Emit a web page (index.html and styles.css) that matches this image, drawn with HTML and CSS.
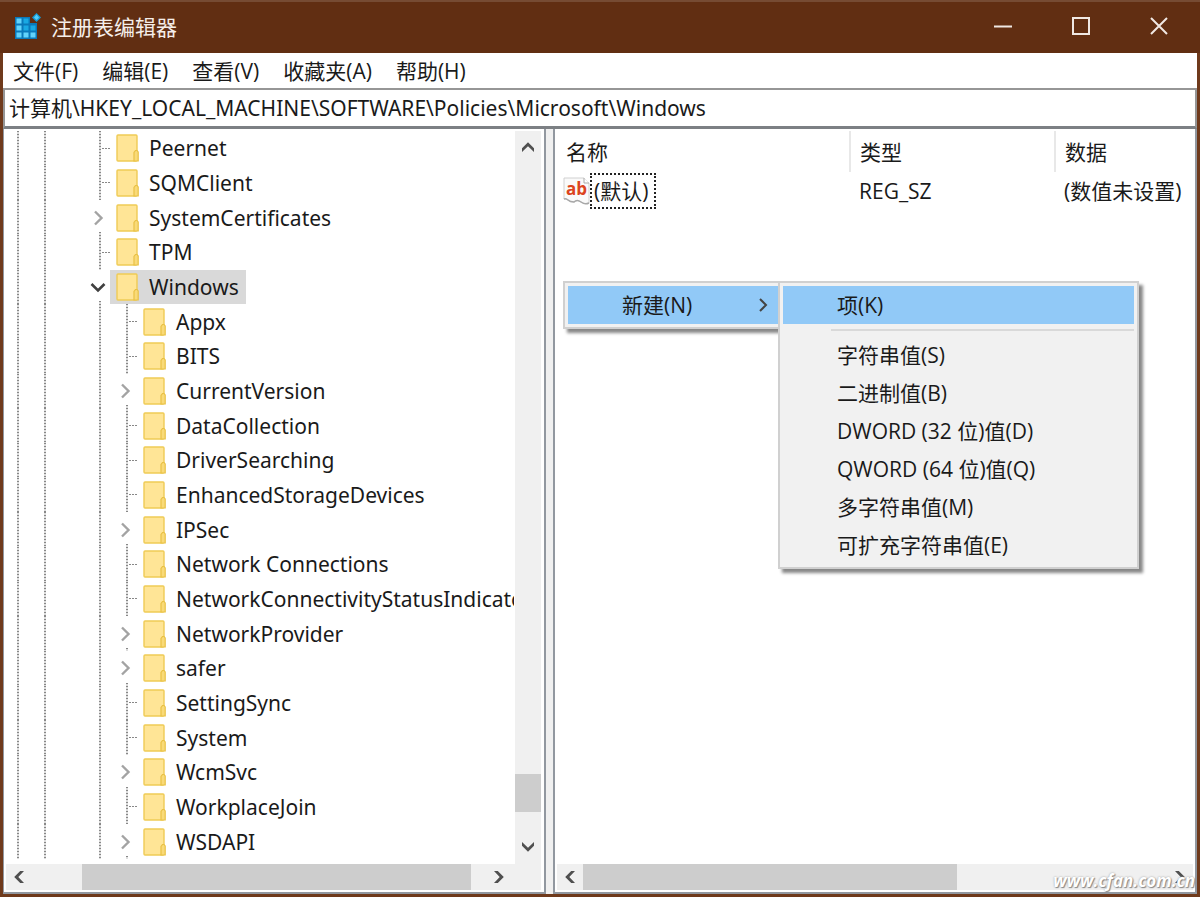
FILE: index.html
```html
<!DOCTYPE html>
<html lang="zh-CN">
<head>
<meta charset="utf-8">
<title>注册表编辑器</title>
<link rel="stylesheet" href="styles.css">
</head>
<body>
<svg class="defs" width="0" height="0" aria-hidden="true">
  <symbol id="folder" viewBox="0 0 23 28">
    <rect x="1" y="1" width="20" height="26" rx="1" fill="#ffe596" stroke="#efcb55" stroke-width="1.4"/>
    <path d="M18 27V18.5L19.5 16.5H21L22.2 18V27Z" fill="#f9da78" stroke="#e9c145" stroke-width="1.2"/>
  </symbol>
  <symbol id="closed" viewBox="0 0 16 16"><path d="M5 1.5L11.5 8L5 14.5" fill="none" stroke="#a3a3a3" stroke-width="2.4"/></symbol>
  <symbol id="opened" viewBox="0 0 16 16"><path d="M1.5 5L8 11.5L14.5 5" fill="none" stroke="#404040" stroke-width="2.6"/></symbol>
  <symbol id="up" viewBox="0 0 14 14"><path d="M1 9.2V12L7 6.3L13 12V8.2L7 2.2L1 8.2Z" fill="#505050"/></symbol>
</svg>
<div class="window">
  <header class="titlebar">
    <svg class="app-icon" viewBox="0 0 26 26" aria-hidden="true">
      <path d="M0 4H15V10H22V26H0Z" fill="#0a79ba"/>
      <g fill="#62d3fb"><path d="M1.500 5.500h5v5h-5zM1.500 12.500h5v5h-5zM1.500 19.500h5v5h-5zM8.500 19.500h5v5h-5zM15.500 19.500h5v5h-5z"/></g>
      <g fill="#19a9e3"><path d="M8.500 5.500h5v5h-5zM8.500 12.500h5v5h-5zM15.500 12.500h5v5h-5z"/></g>
      <path d="M21.500 0L26 4.500L21.500 9L17 4.500Z" fill="#159bd6"/><path d="M21.500 1.500L24 4.500L21.500 7L19 4.500Z" fill="#55cdf9"/>
    </svg>
    <h1 class="title">注册表编辑器</h1>
    <div class="controls">
      <button class="control" aria-label="最小化"><svg viewBox="0 0 20 20"><path d="M1 10.500H19"/></svg></button>
      <button class="control" aria-label="最大化"><svg viewBox="0 0 20 20"><path d="M2 2H18V18H2Z"/></svg></button>
      <button class="control" aria-label="关闭"><svg viewBox="0 0 20 20"><path d="M2 2L18 18M18 2L2 18"/></svg></button>
    </div>
  </header>
  <nav class="menubar">
    <button>文件(F)</button><button>编辑(E)</button><button>查看(V)</button><button>收藏夹(A)</button><button>帮助(H)</button>
  </nav>
  <input class="address" aria-label="地址" value="计算机\HKEY_LOCAL_MACHINE\SOFTWARE\Policies\Microsoft\Windows">
  <main class="panes">
    <section class="pane tree-pane">
      <div class="tree-view">
        <ul class="tree" id="tree"></ul>
        <div class="scroll vertical">
          <button class="arrow" aria-label="向上"><svg><use href="#up"/></svg></button>
          <div class="track"><div class="thumb"></div></div>
          <button class="arrow down" aria-label="向下"><svg><use href="#up"/></svg></button>
        </div>
      </div>
      <div class="scroll horizontal tree-scroll">
        <button class="arrow left" aria-label="向左"><svg><use href="#up"/></svg></button>
        <div class="track"><div class="thumb"></div></div>
        <button class="arrow right" aria-label="向右"><svg><use href="#up"/></svg></button>
      </div>
    </section>
    <section class="pane value-pane">
      <div class="values-view">
        <table class="values">
          <thead><tr><th class="name">名称</th><th class="type">类型</th><th>数据</th></tr></thead>
          <tbody><tr>
            <td><div class="value-name">
              <svg class="string-icon" viewBox="0 0 27 28" aria-hidden="true">
                <path d="M1 1H21L26 6V26Q22 28 18 25Q14 22 11 25Q7 25 5 23Q3 21 1 22Z" fill="#fafafa" stroke="#d0d0d0"/>
                <path d="M1 22Q3 21 5 23Q7 25 11 25Q14 22 18 25Q22 28 26 26" fill="none" stroke="#a8a8a8" stroke-width="1.500"/>
                <path d="M21 1V6H26" fill="#fff" stroke="#aaa"/>
                <text x="3" y="18" class="ab">ab</text>
              </svg><span class="focused">(默认)</span></div></td>
            <td>REG_SZ</td><td>(数值未设置)</td>
          </tr></tbody>
        </table>
      </div>
      <div class="scroll horizontal value-scroll">
        <button class="arrow left" aria-label="向左"><svg><use href="#up"/></svg></button>
        <div class="track"><div class="thumb"></div></div>
        <button class="arrow right" aria-label="向右"><svg><use href="#up"/></svg></button>
      </div>
      <div class="menu context">
        <button class="item active">新建(N)<svg class="more" viewBox="0 0 16 16"><path d="M5 2L11 8L5 14"/></svg></button>
        <div class="menu submenu">
          <button class="item active">项(K)</button>
          <hr>
          <button class="item">字符串值(S)</button>
          <button class="item">二进制值(B)</button>
          <button class="item">DWORD (32 位)值(D)</button>
          <button class="item">QWORD (64 位)值(Q)</button>
          <button class="item">多字符串值(M)</button>
          <button class="item">可扩充字符串值(E)</button>
        </div>
      </div>
      <div class="watermark">www.cfan.com.cn</div>
    </section>
  </main>
</div>
<script src="tree.js"></script>
</body>
</html>
```
FILE: styles.css
```css
* { box-sizing: border-box; }
body {
  margin: 0;
  color: #1a1a1a;
  font: 21px/28px "Noto Sans", "Noto Sans CJK SC", sans-serif;
}
button, input { font: inherit; color: inherit; border: 0; background: none; padding: 0; margin: 0; }
ul { list-style: none; margin: 0; padding: 0; }
.defs { position: absolute; }
.window {
  display: flex; flex-direction: column; height: 100vh; min-height: 500px;
  border: 3px solid #6f3a1c; border-top: 0; background: #fff;
}
.titlebar { display: flex; align-items: center; flex: none; height: 53px; margin: 0 -3px; padding: 0 2px 4px 15px; background: #612e12; border-top: 2px solid #764b33; }
.app-icon { width: 26px; height: 26px; margin-right: 10px; }
.title { margin: 0; flex: 1; color: #f5eeea; font: 21px/28px "Noto Sans CJK SC", sans-serif; }
.controls { display: flex; }
.control { width: 78px; height: 46px; display: grid; place-items: center; }
.control svg { width: 20px; height: 20px; fill: none; stroke: #f0e8e3; stroke-width: 2; }
.menubar { display: flex; align-items: center; flex: none; gap: 24px; height: 35px; padding-left: 10px; }
.menubar, .menu, .values { font-family: "Open Sans", "Noto Sans CJK SC", sans-serif; font-size: 21px; }
.address { flex: none; width: 100%; height: 41px; padding: 0 4px 2px; border: 2px solid #969696; border-bottom: 3px solid #7c8084; outline: 0; }
.panes { flex: 1; min-height: 0; display: grid; grid-template-columns: 543fr 7px 644fr; background: #f0f0f0; }
.pane { min-width: 0; min-height: 0; display: flex; flex-direction: column; background: #fff; border: 2px solid #9298a0; border-top: 0; padding: 2px; }
.tree-pane { border-left-width: 1px; padding: 2px 3px 2px 0; }
.value-pane { grid-column: 3; position: relative; }
.tree-view { flex: 1; min-height: 0; display: flex; }
.tree { flex: 1; min-width: 0; display: grid; grid-auto-rows: 1fr; overflow: hidden; padding-bottom: 5px; margin-right: 1px; }
.row { display: flex; min-width: 0; min-height: 0; overflow: hidden; }
.guide { flex: none; width: 27px; display: grid; place-items: center; }
.guide.blank { width: 28px; }
.guide.branch { width: 24px; padding-right: 3px; }
.guide.line {
  background: repeating-linear-gradient(#888 0 1px, #ddd 1px 3px) 13px 0 / 2px 100% no-repeat;
}
.guide.tick {
  background:
    repeating-linear-gradient(#888 0 1px, #ddd 1px 3px) 13px 0 / 2px 100% no-repeat,
    repeating-linear-gradient(90deg, #888 0 2px, #fff 2px 3px) 16px 50% / 8px 1px no-repeat;
}
.guide.toggle { background: repeating-linear-gradient(#888 0 1px, #ddd 1px 3px) 13px 100% / 2px 3px no-repeat; padding-left: 3px; }
.guide svg { width: 16px; height: 16px; }
.label { display: flex; align-items: center; gap: 10px; flex: none; padding: 0 7px 0 6px; white-space: nowrap; }
.label svg { width: 23px; height: 28px; flex: none; }
.label.selected { background: #d9d9d9; }
.scroll { display: flex; background: #f0f0f0; flex: none; }
.track { flex: 1; display: flex; }
.thumb { background: #cdcdcd; }
.arrow { display: grid; place-items: center; flex: none; width: 26px; height: 26px; }
.arrow svg { width: 14px; height: 14px; }
.down svg { transform: rotate(180deg); }
.left svg { transform: rotate(-90deg); }
.right svg { transform: rotate(90deg); }
.vertical { width: 26px; flex-direction: column; padding: 3px 0 4px; }
.vertical .track { flex-direction: column; justify-content: flex-end; padding-bottom: 22px; }
.vertical .thumb { height: 38px; }
.horizontal { height: 26px; }
.tree-scroll { margin-left: 2px; padding-right: 29px; }
.tree-scroll .track { padding: 0 15px 0 50px; }
.tree-scroll .thumb { flex: 1; }
.value-scroll .thumb { width: 64%; }
.values-view { flex: 1; min-height: 0; overflow: hidden; }
.values { width: 100%; border-collapse: collapse; table-layout: fixed; }
.values th, .values td { text-align: left; font-weight: 400; padding: 0 0 0 9px; white-space: nowrap; }
.values th { height: 41px; border-right: 2px solid #e8e8e8; }
.values th:last-child { border: 0; }
.values td { height: 38px; }
.values td:first-child { padding-left: 6px; }
.name { width: 293px; }
.type { width: 205px; }
.value-name { display: flex; align-items: center; }
.string-icon { width: 27px; height: 28px; }
.ab { font: bold 17px "Open Sans", sans-serif; fill: #dc4420; }
.focused { height: 36px; padding: 2px 6px 2px 2px; border: 2px dotted #222; }
.menu { position: absolute; background: #f1f1f1; border: 2px solid #d0d0d0; box-shadow: 4px 4px 3px #888; padding: 3px; }
.context { left: 8px; top: 152px; width: 217px; padding-right: 0; }
.submenu { left: 100%; top: -2px; width: 361px; }
.item { display: flex; align-items: center; width: 100%; height: 38px; padding-left: 54px; text-align: left; white-space: pre; }
.item.active { background: #91c9f7; }
.submenu hr { margin: 5px 0 5px 48px; border: 0; height: 2px; background: #d9d9d9; }
.more { width: 16px; height: 16px; margin: 0 7px 0 auto; fill: none; stroke: #444; stroke-width: 2; }
.watermark { position: absolute; right: 0; bottom: 0; color: #fff; font: italic bold 17px/22px "Open Sans", sans-serif; text-shadow: 1px 1px 1px #888, 0 0 2px #999; }
```
FILE: tree.js
```js
// [name, depth, state]
const keys = [
  ["Peernet", 1], ["SQMClient", 1], ["SystemCertificates", 1, "closed"], ["TPM", 1], ["Windows", 1, "opened"],
  ["Appx", 2], ["BITS", 2], ["CurrentVersion", 2, "closed"], ["DataCollection", 2], ["DriverSearching", 2],
  ["EnhancedStorageDevices", 2], ["IPSec", 2, "closed"], ["Network Connections", 2],
  ["NetworkConnectivityStatusIndicator", 2], ["NetworkProvider", 2, "closed"], ["safer", 2, "closed"],
  ["SettingSync", 2], ["System", 2], ["WcmSvc", 2, "closed"], ["WorkplaceJoin", 2], ["WSDAPI", 2, "closed"]
];
document.getElementById("tree").innerHTML = keys.map(([name, depth, state]) => {
  const outer = '<span class="guide line"></span><span class="guide line"></span><span class="guide blank"></span>' +
    (depth === 2 ? '<span class="guide line"></span>' : "");
  const branch = state
    ? `<span class="guide branch toggle"><svg><use href="#${state}"/></svg></span>`
    : '<span class="guide branch tick"></span>';
  const selected = state === "opened" ? " selected" : "";
  return `<li class="row">${outer}${branch}<span class="label${selected}"><svg><use href="#folder"/></svg>${name}</span></li>`;
}).join("");
```
